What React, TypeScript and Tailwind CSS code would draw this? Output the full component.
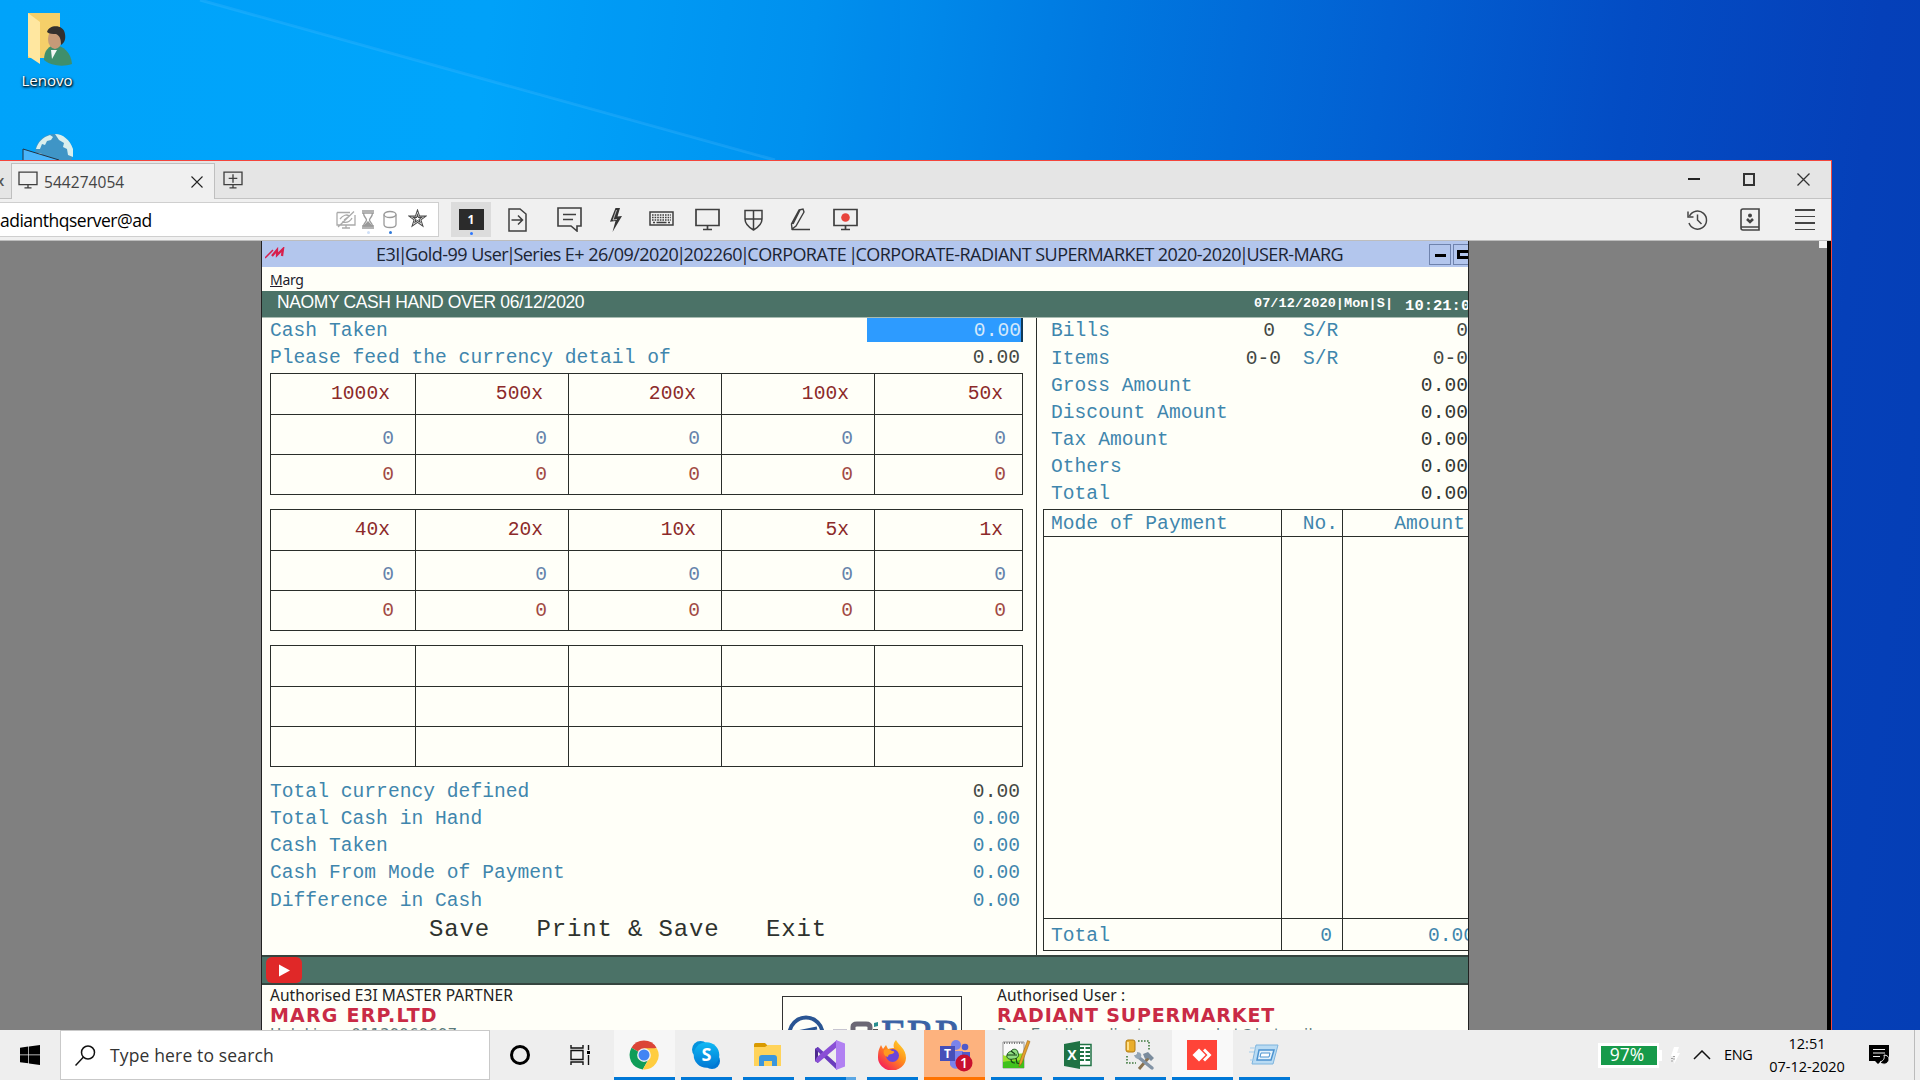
import React from "react";

const sans = "font-['Open_Sans','Noto_Sans',sans-serif]";
const mono = "font-['Liberation_Mono',monospace]";

function MonitorIcon({ children, w = 25, h = 23 }: { children?: React.ReactNode; w?: number; h?: number }) {
  return (
    <svg width={w} height={h} viewBox="0 0 25 23" fill="none" stroke="#3f3f3f" strokeWidth="1.7">
      <path d="M1 1.5h23v16H1zM12.5 17.5v4M8 21.5h9" />
      {children}
    </svg>
  );
}

function DesktopIcons() {
  return (
    <div className="flex w-[94px] flex-col items-center">
      <svg className="mt-[12px] ml-[4px]" width="48" height="56" viewBox="0 0 48 56">
        <path d="M3 1h32v45H3z" fill="#f5cf69" />
        <path d="M3 1l12 9v42L3 44z" fill="#ffe7a0" />
        <path d="M19 48c0-10 5-14 11-15 8 1 16 7 17 19-9 3-21 2-28-4z" fill="#3f8f6c" />
        <path d="M26 38l1 9 5-9z" fill="#f3f6f4" />
        <ellipse cx="30" cy="27" rx="7" ry="10" fill="#c69a78" />
        <path d="M22 20c2-8 17-8 18 2 1 6-1 9-4 11 0-6-1-9-5-11-3 0-7 0-9-2z" fill="#33302e" />
      </svg>
      <div className={`${sans} text-[15px] leading-[24px] text-white [text-shadow:1px_1px_2px_#000,0_1px_3px_#000]`}>
        Lenovo
      </div>
      <svg className="mt-[40px] ml-[2px]" width="54" height="30" viewBox="0 0 54 30">
        <circle cx="33" cy="21" r="19" fill="#3f95c6" />
        <path d="M15 17c2-7 7-12 14-14l3 2-2 3-4 1-2 4-3-1-2 5zM34 2c8 0 15 6 18 15v8l-5-2-1-6-4-2 1-4-5-3zM17 21l4 1 1 5-4 1z" fill="#d9efee" />
        <path d="M2 17l36 11v4H2z" fill="#49b5fb" stroke="#234" strokeWidth="1" />
      </svg>
    </div>
  );
}

function TabStrip() {
  return (
    <div className="flex h-[38px] items-stretch bg-[#e5e5e5]">
      <div className="w-[11px] overflow-hidden border-b border-[#bfbfbf]">
        <div className={`${sans} mt-[8px] -ml-[4px] text-[15px] leading-[22px] font-semibold text-[#555]`}>x</div>
      </div>
      <div className="mt-[2px] flex w-[204px] items-center border border-b-0 border-[#bfbfbf] bg-[#f0f0f0]">
        <div className="ml-[6px] -mt-[3px]">
          <MonitorIcon w={20} h={18} />
        </div>
        <span className={`${sans} ml-[6px] w-[141px] text-[15.5px] leading-[20px] text-[#444] tracking-[0.05px]`}>544274054</span>
        <svg className="ml-[6px]" width="12" height="12" viewBox="0 0 12 12" stroke="#222" strokeWidth="1.1">
          <path d="M.5.5l11 11M11.5.5l-11 11" />
        </svg>
      </div>
      <div className="flex flex-1 items-center border-b border-[#c3c3c3]">
        <div className="ml-[8px]">
          <MonitorIcon w={20} h={18}>
            <path d="M12.500 4v11M7 9.500h11" />
          </MonitorIcon>
        </div>
        <div className="flex-1" />
        <div className="mr-[21px] flex w-[122px] items-center justify-between pb-[1px]">
          <div className="h-[1.500px] w-[12px] bg-[#222]" />
          <div className="h-[13px] w-[12px] border-2 border-[#333]" />
          <svg width="13" height="13" viewBox="0 0 13 13" stroke="#333" strokeWidth="1.300">
            <path d="M.5.5l12 12M12.500.5l-12 12" />
          </svg>
        </div>
      </div>
    </div>
  );
}

function Slot({ w, children }: { w: string; children: React.ReactNode }) {
  return <div className={`flex h-[35px] items-center justify-center ${w}`}>{children}</div>;
}

function Toolbar() {
  return (
    <div className="flex h-[42px] items-start border-b border-[#bdbdbd] bg-[#f0f0f0] pt-[3px]">
      <div className="flex h-[35px] w-[439px] items-center border border-l-0 border-[#cfcfcf] bg-white">
        <div className={`${sans} w-[336px] text-[17.500px] leading-[24px] text-black tracking-[-0.500px]`}>adianthqserver@ad</div>
        <svg width="20" height="18" viewBox="0 0 20 18" fill="none" stroke="#aaa" strokeWidth="1.300">
          <path d="M1 1.500h13M19 4v10H1V1.500M10 14v3M6 17h8M2 16L18 .5M4 8c3-4 7-5 9-3M6 11c4 1 8 0 10-4M8 9l4-3" />
        </svg>
        <div className="mt-[5px] ml-[5px] flex flex-col items-center">
          <svg width="14" height="19" viewBox="0 0 14 19" fill="none" stroke="#9a9a9a" strokeWidth="1.300">
            <path d="M1 1h12M1 3h12M1 18h12M1 16h12M2.500 3c0 4 3 5 3 7s-3 3-3 6M11.500 3c0 4-3 5-3 7s3 3 3 6" />
            <path d="M3 16l4-4 4 4z" fill="#9a9a9a" />
          </svg>
          <div className="mt-[2px] size-[3px] rounded-full bg-[#cfe0f8]" />
        </div>
        <div className="mt-[5px] ml-[8px] flex flex-col items-center">
          <svg width="14" height="19" viewBox="0 0 14 19" fill="none" stroke="#9a9a9a" strokeWidth="1.300">
            <ellipse cx="7" cy="4.500" rx="6" ry="3" />
            <path d="M1 4.500v10c0 4 12 4 12 0v-10" />
          </svg>
          <div className="mt-[2px] size-[3px] rounded-full bg-[#2f78d8]" />
        </div>
        <svg className="-mt-[2px] ml-[11px]" width="19" height="19" viewBox="0 0 20 20" fill="none" stroke="#4a4a4a" strokeWidth="1.100">
          <path d="M10 1l2.200 6.500H19l-5.400 4 2.100 6.500-5.700-4-5.700 4 2.100-6.500L1 7.500h6.800z" />
          <path d="M10 6l1 3h3.300l-2.600 2 1 3-2.700-1.800L7.300 14l1-3-2.600-2H9z" />
        </svg>
      </div>
      <div className="ml-[12px] flex h-[35px] w-[40px] flex-col items-center bg-[#dcdcdc]">
        <div className="mt-[7px] h-[21px] w-[25px] bg-[#2b2b2b] text-center font-['Open_Sans',sans-serif] text-[12px] leading-[21px] font-bold text-white">1</div>
        <div className="mt-[2px] size-[3px] rounded-full bg-[#2f78ff]" />
      </div>
      <Slot w="w-[53px]">
        <svg width="19" height="24" viewBox="0 0 19 24" fill="none" stroke="#3f3f3f" strokeWidth="1.500">
          <path d="M1 1h11l6 5v17H1zM3.500 12h11M10 7.500l4.500 4.500-4.500 4.500" />
        </svg>
      </Slot>
      <Slot w="w-[51px]">
        <svg width="25" height="25" viewBox="0 0 25 25" fill="none" stroke="#3f3f3f" strokeWidth="1.600">
          <path d="M1 1h23v18h-4v5l-6-5H1zM6 7.500h13M6 12.500h10" />
        </svg>
      </Slot>
      <Slot w="w-[42px]">
        <svg width="12" height="24" viewBox="0 0 12 24" fill="#333">
          <path d="M5.500 0h4.500L7.500 8.500 12 8 2.500 24 5.500 13 0 13.800z" />
          <path d="M6.500 2L3 12l4-.6" stroke="#f0f0f0" strokeWidth=".7" fill="none" />
        </svg>
      </Slot>
      <Slot w="w-[49px]">
        <svg className="-mt-[3px]" width="25" height="15" viewBox="0 0 25 15" fill="none" stroke="#3f3f3f" strokeWidth="1.500">
          <path d="M1 1h23v13H1z" />
          <path d="M3 4h19M3 6.500h19M3 9h19" strokeDasharray="1.600 1" />
          <path d="M4 11.500h2M7.500 11.500h10M19 11.500h2" />
        </svg>
      </Slot>
      <Slot w="w-[43px]">
        <MonitorIcon />
      </Slot>
      <Slot w="w-[48px]">
        <svg width="19" height="22" viewBox="0 0 19 22" fill="none" stroke="#3f3f3f" strokeWidth="1.500">
          <path d="M1 1.500h17V10c0 6-5 9-8.500 11C6 19 1 16 1 10zM9.500 1.500V21M1 10h17" />
        </svg>
      </Slot>
      <Slot w="w-[46px]">
        <svg width="20" height="23" viewBox="0 0 20 23" fill="none" stroke="#3f3f3f" strokeWidth="1.400">
          <path d="M9 2l4-1 1 3-8 14-4 3-.5-5zM10 2l-7 14M2 21.500h18" />
        </svg>
      </Slot>
      <Slot w="w-[44px]">
        <MonitorIcon>
          <circle cx="12.500" cy="9.500" r="4.300" fill="#e8443c" stroke="none" />
        </MonitorIcon>
      </Slot>
      <div className="flex-1" />
      <div className="mr-[16px] flex h-[35px] w-[128px] items-center justify-between">
        <svg width="21" height="22" viewBox="0 0 21 22" fill="none" stroke="#444" strokeWidth="1.500">
          <path d="M2.500 7A9 9 0 1 1 2 14M1 2.500V8h5.500M10.500 5.500V11l4 4" />
        </svg>
        <svg className="-ml-[3px]" width="20" height="23" viewBox="0 0 20 23" fill="none" stroke="#444" strokeWidth="1.600">
          <path d="M1 3a2 2 0 0 1 2-2h16v21H3a2 2 0 0 1-2-2zM1 19h18" />
          <circle cx="10" cy="7.500" r="1.200" fill="#333" />
          <path d="M7 11l3 3 3-3" strokeWidth="2.600" />
        </svg>
        <div className="flex h-[21px] w-[20px] flex-col justify-between">
          {[0, 1, 2, 3].map((i) => (
            <div key={i} className="h-[1.500px] bg-[#444]" />
          ))}
        </div>
      </div>
    </div>
  );
}

const label = "text-[#3f86ad]";
const line = "border-[#2a2e2a]";

function DenominationTable({ heads }: { heads: string[] }) {
  return (
    <div className={`grid w-[753px] grid-cols-[146px_153px_153px_153px_148px] grid-rows-[41px_40px_40px] border-t ${line}`}>
      {[0, 1, 2].map((row) =>
        [0, 1, 2, 3, 4].map((col) => {
          const text = heads.length ? (row === 0 ? heads[col] : "0") : "";
          const color = row === 1 ? "text-[#6583ab]" : row === 0 ? "text-[#8c2a2a]" : "text-[#a14a44]";
          const padInner = row === 0 ? "pr-[25px]" : "pr-[21px]";
          const padLast = row === 0 ? "pr-[19px]" : "pr-[16px]";
          return (
            <div
              key={`${row}-${col}`}
              className={`flex items-center justify-end border-r border-b ${line} ${col === 0 ? "border-l" : ""} ${row === 0 ? "pt-[1px]" : row === 1 ? "pt-[11px]" : "pt-[2px]"} ${color} ${col === 4 ? padLast : padInner}`}
            >
              {text}
            </div>
          );
        }),
      )}
    </div>
  );
}

function LabelRow({ name, value, valueColor }: { name: string; value: string; valueColor: string }) {
  return (
    <div className="flex h-[27.150px] items-center justify-between pr-[3px]">
      <span className={label}>{name}</span>
      <span className={valueColor}>{value}</span>
    </div>
  );
}

function LeftPane() {
  return (
    <div className="w-[775px] border-r border-[#2a2e2a] pl-[8px]">
      <div className="w-[753px]">
        <div className="flex h-[27px] items-start justify-between">
          <span className={`${label} leading-[27px]`}>Cash Taken</span>
          <span className="h-[24px] w-[156px] border-r-2 border-[#123a55] bg-[#2d9bff] text-right leading-[27px] text-[#d5e9fb]">0.00</span>
        </div>
        <LabelRow name="Please feed the currency detail of" value="0.00" valueColor="text-[#444844]" />
      </div>
      <div className="mt-[1px] flex flex-col gap-[14px]">
        <DenominationTable heads={["1000x", "500x", "200x", "100x", "50x"]} />
        <DenominationTable heads={["40x", "20x", "10x", "5x", "1x"]} />
        <DenominationTable heads={[]} />
      </div>
      <div className="mt-[12px] w-[753px]">
        <LabelRow name="Total currency defined" value="0.00" valueColor="text-[#444844]" />
        <LabelRow name="Total Cash in Hand" value="0.00" valueColor={label} />
        <LabelRow name="Cash Taken" value="0.00" valueColor={label} />
        <LabelRow name="Cash From Mode of Payment" value="0.00" valueColor={label} />
        <LabelRow name="Difference in Cash" value="0.00" valueColor={label} />
      </div>
      <div className="-mt-[1px] flex gap-[46.500px] pl-[159px] text-[24px] leading-[32px] tracking-[0.850px] text-[#2e322e]">
        <span>Save</span>
        <span>Print &amp; Save</span>
        <span>Exit</span>
      </div>
    </div>
  );
}

function RightPane() {
  const totals = ["Gross Amount", "Discount Amount", "Tax Amount", "Others", "Total"];
  const counts = [
    ["Bills", "0", "0", "w-[224px]"],
    ["Items", "0-0", "0-0", "w-[230px]"],
  ];
  return (
    <div className="w-[431px] overflow-hidden pl-[6px]">
      <div className="h-[191px] pt-[0.500px]">
        {counts.map(([name, a, b, w]) => (
          <div key={name} className="flex h-[27.150px] items-center pl-[8px]">
            <span className={`flex justify-between ${w}`}>
              <span className={label}>{name}</span>
              <span className="text-[#444844]">{a}</span>
            </span>
            <span className={`${label} ${a === "0" ? "ml-[28px]" : "ml-[22px]"}`}>S/R</span>
            <span className="flex-1 text-right text-[#444844]">{b}</span>
          </div>
        ))}
        {totals.map((name) => (
          <div key={name} className="flex h-[27.150px] items-center justify-between pl-[8px]">
            <span className={label}>{name}</span>
            <span className="text-[#333733]">0.00</span>
          </div>
        ))}
      </div>
      <div className={`grid w-[440px] grid-cols-[239px_61px_140px] grid-rows-[27px_382px_32px] border-t ${line} ${label}`}>
        <div className={`border-r border-b border-l pl-[7px] leading-[28px] ${line}`}>Mode of Payment</div>
        <div className={`border-r border-b pr-[4px] text-right leading-[28px] ${line}`}>No.</div>
        <div className={`border-b pr-[18px] text-right leading-[28px] ${line}`}>Amount</div>
        <div className={`border-r border-b border-l ${line}`} />
        <div className={`border-r border-b ${line}`} />
        <div className={`border-b ${line}`} />
        <div className={`border-r border-b border-l pl-[7px] leading-[34px] ${line}`}>Total</div>
        <div className={`border-r border-b pr-[10px] text-right leading-[34px] ${line}`}>0</div>
        <div className={`border-b pl-[85px] leading-[34px] ${line}`}>0.00</div>
      </div>
    </div>
  );
}

function Footer() {
  return (
    <div className="flex h-[47px] overflow-hidden bg-[#fffff8] font-['DejaVu_Sans',sans-serif]">
      <div className="w-[520px] shrink-0 pl-[8px] whitespace-nowrap">
        <div className="font-['Noto_Sans',sans-serif] text-[15.500px] leading-[20px] tracking-[0.060px] text-[#222]">Authorised E3I MASTER PARTNER</div>
        <div className="text-[19px] leading-[21px] font-bold tracking-[1.200px] text-[#c92b45]">MARG ERP.LTD</div>
        <div className="text-[15px] leading-[18px] tracking-[0.100px] text-[#5c7a7a]">HelpLine : 01139969697</div>
      </div>
      <div className="mt-[11px] h-[60px] w-[180px] shrink-0 border border-[#333]">
        <svg width="178" height="58" viewBox="0 0 178 58">
          <circle cx="23" cy="37" r="16.500" fill="none" stroke="#2a5593" strokeWidth="4" />
          <path d="M14 35l20-4" stroke="#2a5593" strokeWidth="3" />
          <path d="M50 34h14" stroke="#8f8aa8" strokeWidth="3" />
          <path d="M70 50V30q0-3 4-3h9q4 0 4 3v20" fill="none" stroke="#6c6874" strokeWidth="5" />
          <path d="M91 26l4-1v4l-4 1z" fill="#2a8f8f" />
          <path d="M90 32h5v20h-5z" fill="#555" />
          <text x="98" y="50" fontFamily="Liberation Serif" fontSize="39" fill="#3a62a5" stroke="#3a62a5" strokeWidth=".8" textLength="77" lengthAdjust="spacingAndGlyphs">ERP</text>
        </svg>
      </div>
      <div className="ml-[35px] whitespace-nowrap">
        <div className="font-['Noto_Sans',sans-serif] text-[15.500px] leading-[20px] tracking-[0.120px] text-[#222]">Authorised User :</div>
        <div className="text-[19px] leading-[21px] font-bold tracking-[0.850px] text-[#c92b45]">RADIANT SUPERMARKET</div>
        <div className="text-[15px] leading-[18px] tracking-[0.150px] text-[#5c7a7a]">Reg Email : radiantsupermarket@hotmail</div>
      </div>
    </div>
  );
}

const titleParts = [
  "E3I",
  "Gold-99 User",
  "Series E+ 26/09/2020",
  "202260",
  "CORPORATE ",
  "CORPORATE-RADIANT SUPERMARKET 2020-2020",
  "USER-MARG",
];

function MargApp() {
  return (
    <div className="flex w-[1208px] flex-col overflow-hidden border-x border-[#222] bg-[#fffff8]">
      <div className="flex h-[26px] items-center bg-[#b3c6ed]">
        <svg className="-mt-[3px] ml-[3px] shrink-0" width="20" height="12" viewBox="0 0 20 12" fill="none" stroke="#d81f4c">
          <path d="M0 11L8 3" strokeWidth="1.500" />
          <path d="M7 9l5-6 0 5 6-6-1 7" strokeWidth="2.300" />
        </svg>
        <div className={`${sans} ml-[91px] w-[1053px] shrink-0 text-[18px] leading-[26px] whitespace-pre text-[#1b2433] tracking-[-0.550px]`}>
          {titleParts.map((part, i) => (
            <React.Fragment key={i}>
              {i > 0 && <span className="-mx-[2px]">|</span>}
              {part}
            </React.Fragment>
          ))}
        </div>
        <div className="flex shrink-0 gap-[2px]">
          <div className="flex h-[21px] w-[22px] items-center justify-center border border-[#6f83ad]">
            <div className="mt-[3px] h-[3px] w-[11px] bg-black" />
          </div>
          <div className="flex h-[21px] w-[22px] items-center justify-center border border-[#6f83ad]">
            <div className="h-[9px] w-[14px] border-[3px] border-black" />
          </div>
        </div>
      </div>
      <div className="h-[24px] pl-[8px] font-['Noto_Sans',sans-serif] text-[14px] leading-[26px] tracking-[-0.300px] text-[#221c2c]">
        <span className="underline">M</span>arg
      </div>
      <div className="flex h-[27px] items-start justify-between border-b border-[#a9bcb2] bg-[#4b7267] text-white">
        <span className="pl-[15px] font-['Liberation_Sans',sans-serif] text-[17.500px] leading-[22px] tracking-[-0.370px]">NAOMY CASH HAND OVER 06/12/2020</span>
        <span className={`flex w-[214px] shrink-0 gap-[12px] overflow-hidden font-bold whitespace-nowrap ${mono}`}>
          <span className="text-[13.500px] leading-[25px] tracking-[0.080px]">07/12/2020|Mon|S|</span>
          <span className="text-[15.500px] leading-[30px]">10:21:04</span>
        </span>
      </div>
      <div className={`flex h-[637px] text-[19.600px] tracking-[0.030px] whitespace-pre ${mono}`}>
        <LeftPane />
        <RightPane />
      </div>
      <div className="flex h-[30px] items-center border-y-2 border-[#35453f] bg-[#4b7267] pl-[4px]">
        <div className="flex h-[26px] w-[36px] items-center justify-center rounded-[6px] bg-[#e02828]">
          <svg width="12" height="13" viewBox="0 0 12 13">
            <path d="M1 .5l11 6-11 6z" fill="#fff" />
          </svg>
        </div>
      </div>
      <Footer />
    </div>
  );
}

const chrome = (
  <svg width="30" height="30" viewBox="0 0 48 48">
    <path d="M24 24L4 12.500A23 23 0 0 1 44 12.500z" fill="#db4437" />
    <path d="M24 24L4 12.500A23 23 0 0 0 22 47l8-14z" fill="#0f9d58" />
    <path d="M24 13h20.500A23 23 0 0 1 22 47l10-17z" fill="#ffcd40" />
    <circle cx="24" cy="24" r="11" fill="#f1f1f1" />
    <circle cx="24" cy="24" r="8.800" fill="#4285f4" />
  </svg>
);
const skype = (
  <svg width="30" height="30" viewBox="0 0 30 30">
    <defs>
      <linearGradient id="sk" x1="0" y1="0" x2="0" y2="1">
        <stop offset="0" stopColor="#10b9f4" />
        <stop offset="1" stopColor="#0078d4" />
      </linearGradient>
    </defs>
    <circle cx="9.500" cy="9.500" r="8.500" fill="#0593dd" />
    <circle cx="21" cy="21" r="8" fill="#0078d4" />
    <circle cx="15.500" cy="15" r="12.800" fill="url(#sk)" />
    <text x="15.500" y="21" fontFamily="Open Sans" fontWeight="700" fontSize="18" fill="#fff" textAnchor="middle">S</text>
  </svg>
);
const explorer = (
  <svg width="28" height="24" viewBox="0 0 28 24">
    <path d="M0 1.500Q0 0 1.500 0H11l3 3-3 3H0z" fill="#d99a00" />
    <path d="M0 4h11l3-2h13v21H0z" fill="#ffd35a" />
    <path d="M5 23V15q0-3 3-3h12q3 0 3 3v8h-5v-5h-8v5z" fill="#3a96dd" />
  </svg>
);
const visualStudio = (
  <svg width="32" height="32" viewBox="0 0 32 32">
    <path d="M1 10l3-2v16l-3-2z" fill="#4b2a8c" />
    <path d="M1 10l3-2 19 17v6z" fill="#6a3cbd" />
    <path d="M1 22l3 2L23 8V1L3 18z" fill="#8a4fd6" />
    <path d="M22 1l9 3.500v23L22 31z" fill="#b180f2" />
  </svg>
);
const firefox = (
  <svg width="30" height="30" viewBox="0 0 30 30">
    <defs>
      <linearGradient id="ff" x1="1" y1="0" x2="0.200" y2="1">
        <stop offset="0" stopColor="#ffe22c" />
        <stop offset=".5" stopColor="#ff8a1c" />
        <stop offset="1" stopColor="#f5155f" />
      </linearGradient>
    </defs>
    <path d="M1 17C1 11 2 9 4 5l2 4 3-4 2 4c3-1 4-1 6-1-1-3 0-6 2-8 2 5 10 8 10 18a14 13 0 0 1-28-1z" fill="url(#ff)" />
    <circle cx="15.500" cy="15.500" r="6.500" fill="#6c45d8" />
    <path d="M7 10c3-2 6-1 8 1 3 0 3 2 0 3-3 0-4 1-4 3-4-1-5-4-4-7z" fill="#ff9a20" />
  </svg>
);
const teams = (
  <svg className="ml-[3px]" width="34" height="34" viewBox="0 0 34 34">
    <circle cx="17" cy="7" r="5" fill="#7b83eb" />
    <circle cx="26" cy="9" r="3.300" fill="#5059c9" />
    <path d="M11 13h13v12a7 7 0 0 1-13 2z" fill="#7b83eb" />
    <path d="M23 14h8v10h-8z" fill="#5059c9" />
    <path d="M1 8h15v15H1z" fill="#464eb8" />
    <text x="8.500" y="20" fontFamily="Open Sans" fontWeight="700" fontSize="12" fill="#fff" textAnchor="middle">T</text>
    <circle cx="25" cy="25" r="8.500" fill="#c8102e" />
    <text x="25" y="30" fontFamily="Open Sans" fontWeight="600" fontSize="14" fill="#fff" textAnchor="middle">1</text>
  </svg>
);
const notepad = (
  <svg width="30" height="30" viewBox="0 0 30 30">
    <path d="M2 2h21v26H2z" fill="#fafafa" stroke="#999" />
    <path d="M3 3h19" stroke="#777" strokeDasharray="1 1.500" strokeWidth="2" />
    <path d="M2 15c6 3 14-3 21-1v14H2z" fill="#9be02f" />
    <path d="M2 22c7-2 14 0 21-3v9H2z" fill="#3fc21d" />
    <path d="M6 15c1-4 4-3 5-5 3-2 6 0 6 3 2 3-1 6-5 6-4 1-7-1-6-4z" fill="#8fdc80" stroke="#205c20" />
    <path d="M6 15l10 0M10 11l4 3M10 19c0 3 2 4 4 4M15 18l1 5 4 1" fill="none" stroke="#163f16" strokeWidth="1.200" />
    <path d="M29 1.500L21 23l-3 4 .5-5L26.500.5z" fill="#e5a02c" stroke="#8a5a14" strokeWidth=".5" />
  </svg>
);
const excel = (
  <svg width="28" height="28" viewBox="0 0 28 28">
    <path d="M14 3.500h13v21H14z" fill="#fff" stroke="#1f7244" strokeWidth="1.500" />
    <path d="M16 7h4M16 11h4M16 15h4M16 19h4M21.500 7H26M21.500 11H26M21.500 15H26M21.500 19H26" stroke="#1f7244" strokeWidth="2" />
    <path d="M0 3L16 0v28L0 25z" fill="#1f7244" />
    <text x="8" y="19" fontFamily="Open Sans" fontWeight="700" fontSize="14" fill="#fff" textAnchor="middle">X</text>
  </svg>
);
const sqlTools = (
  <svg width="30" height="32" viewBox="0 0 30 32">
    <rect x="1" y="1" width="9" height="12" rx="2" fill="#e9ae2c" stroke="#b17a10" />
    <path d="M3 3v8" stroke="#ffe08a" strokeWidth="2" />
    <path d="M13 2h11v10M2 17v7h9" fill="none" stroke="#3f7a3f" strokeWidth="1.600" strokeDasharray="1.600 1.400" />
    <path d="M25 17L14 30" stroke="#8a7350" strokeWidth="3" />
    <path d="M12 17l15 12" stroke="#8293a5" strokeWidth="3.500" strokeLinecap="round" />
    <path d="M9 16l3 0 0-3c4 0 5 3 4 5-2 3-6 2-7-2z" fill="#93a5b6" />
    <path d="M18 15l5-2 6 6-3 3-3-3-3 1z" fill="#7a8b9c" />
  </svg>
);
const anydesk = (
  <div className="flex size-[30px] items-center justify-center bg-[#ff4438]">
    <svg width="20" height="14" viewBox="0 0 20 14" fill="#fff">
      <path d="M7 .5L13.500 7 7 13.500.5 7z" />
      <path d="M11 2.500L13 .5 19.500 7 13 13.500l-2-2L15.500 7z" />
    </svg>
  </div>
);
const runDialog = (
  <svg width="30" height="22" viewBox="0 0 30 22">
    <path d="M7 1h22l-5 19H3z" fill="#b9dbf3" stroke="#7db4de" />
    <path d="M10 6h15l-3 10H8z" fill="#e4f2fc" stroke="#4c93d0" strokeWidth="1.500" />
    <path d="M12 9h9l-1 4h-9z" fill="#fff" stroke="#4c93d0" />
    <path d="M1 4h6M0 8h5M1 16h5" stroke="#a5cdea" />
  </svg>
);

const pinned = [
  { id: "chrome", icon: chrome, tile: "bg-[#f6f6f6]", bar: "w-[61px] bg-[#0078d7]" },
  { id: "skype", icon: skype, tile: "", bar: "w-[51px] bg-[#0078d7]" },
  { id: "explorer", icon: explorer, tile: "", bar: "w-[51px] bg-[#0078d7]" },
  { id: "vs", icon: visualStudio, tile: "", bar: "w-[51px] border-r-[10px] border-[#5ba7e4] bg-[#0078d7]" },
  { id: "firefox", icon: firefox, tile: "", bar: "w-[51px] bg-[#0078d7]" },
  { id: "teams", icon: teams, tile: "bg-[#fdb27e]", bar: "w-[61px] bg-[#ff7300]" },
  { id: "notepad", icon: notepad, tile: "", bar: "w-[51px] bg-[#0078d7]" },
  { id: "excel", icon: excel, tile: "", bar: "w-[51px] bg-[#0078d7]" },
  { id: "sql", icon: sqlTools, tile: "", bar: "w-[51px] bg-[#0078d7]" },
  { id: "anydesk", icon: anydesk, tile: "bg-[#f9f9f9]", bar: "w-[61px] bg-[#0078d7]" },
  { id: "run", icon: runDialog, tile: "", bar: "w-[51px] bg-[#0078d7]" },
];

function Taskbar() {
  return (
    <div className={`flex h-[50px] items-stretch bg-[#eeeeee] ${sans}`}>
      <div className="flex w-[60px] items-center justify-center">
        <svg width="20" height="20" viewBox="0 0 20 20" fill="#000">
          <path d="M0 2.800L8.300 1.600V9.500H0zM9 1.500L20 0v9.500H9zM0 10.300h8.300v8L0 17.200zM9 10.300h11V20L9 18.500z" />
        </svg>
      </div>
      <div className="flex w-[430px] items-center border border-[#c9c9c9] bg-white">
        <svg className="ml-[14px]" width="21" height="21" viewBox="0 0 21 21" fill="none" stroke="#111" strokeWidth="1.500">
          <circle cx="13" cy="7.500" r="6.500" />
          <path d="M8.500 12L.5 20.500" />
        </svg>
        <span className="ml-[14px] text-[17.500px] tracking-[0.150px] text-[#333]">Type here to search</span>
      </div>
      <div className="flex w-[61px] items-center justify-center pr-[1px]">
        <div className="size-[20px] rounded-full border-[3px] border-black" />
      </div>
      <div className="flex w-[61px] items-center justify-center pr-[3px]">
        <svg width="21" height="20" viewBox="0 0 21 20" fill="none" stroke="#111" strokeWidth="1.400">
          <path d="M1 0v3h12V0M1 20v-3h12v3M1 5.500h12v9H1zM18.500 0v5M18.500 10v10" />
          <path d="M17 6h3v3h-3z" fill="#000" stroke="none" />
        </svg>
      </div>
      <div className="ml-[1px] flex">
        {pinned.map((p) => (
          <div key={p.id} className="flex w-[62px] flex-col items-center">
            <div className={`flex h-[47px] w-[61px] items-center justify-center pt-[3px] ${p.tile}`}>{p.icon}</div>
            <div className={`h-[3px] ${p.bar}`} />
          </div>
        ))}
      </div>
      <div className="flex-1" />
      <div className="flex items-center text-black">
        <div className="flex h-[25px] w-[61px] items-center border-[3px] border-r-2 border-white bg-[#169a4a]">
          <span className="-mt-[2px] -ml-[2px] w-full text-center text-[17.500px] leading-[19px] text-white">97%</span>
        </div>
        <div className="h-[11px] w-[3px] bg-white" />
        <svg className="ml-[9px]" width="9" height="17" viewBox="0 0 9 17">
          <path d="M3 0h5L6 6h3L3 17l1-8H0z" fill="#fff" />
          <path d="M1 11v5M3 9v4" stroke="#555" strokeDasharray="1 1.500" />
        </svg>
        <svg className="ml-[13px]" width="18" height="10" viewBox="0 0 18 10" fill="none" stroke="#111" strokeWidth="1.500">
          <path d="M1 9l8-8 8 8" />
        </svg>
        <span className="ml-[13px] w-[31px] text-[14.500px] tracking-[-0.400px]">ENG</span>
        <div className="ml-[12px] w-[80px] text-center text-[14.500px] leading-[23px]">
          <div>12:51</div>
          <div>07-12-2020</div>
        </div>
        <svg className="ml-[22px]" width="22" height="21" viewBox="0 0 22 21">
          <path d="M0 0h20v16h-8l-3 3-3-3H0z" fill="#000" />
          <path d="M4 4.500h12M4 8h12M4 11.500h7" stroke="#eee" strokeWidth="1.200" />
          <path d="M15 10c1 4-1 6-4 7 3 4 9 2 9-3 0-2-2-4-5-4z" fill="#000" stroke="#eee" strokeWidth="1" />
        </svg>
        <div className="ml-[23px] h-[50px] w-[6px] border-l border-[#bbb]" />
      </div>
    </div>
  );
}

export default function App() {
  return (
    <div className="flex h-[1080px] w-[1920px] flex-col overflow-hidden">
      <div className="relative h-[1030px] overflow-hidden bg-[linear-gradient(97deg,#00a3fa_0%,#00a5fb_24%,#0093f0_40%,#0078e0_54%,#0260d2_68%,#034cc4_80%,#0540b9_92%,#053eb5_100%)]">
        <svg className="absolute top-0 left-0" width="900" height="160" viewBox="0 0 900 160">
          <path d="M200 0L480 78L775 160" fill="none" stroke="#5cc6ff" strokeOpacity=".22" strokeWidth="3" />
          <path d="M200 0L775 160H900V0z" fill="#0060d0" fillOpacity=".05" />
        </svg>
        <DesktopIcons />
        <div className="absolute top-[160px] left-0 flex h-[880px] w-[1832px] flex-col border-t border-r border-[#f4453c]">
          <TabStrip />
          <Toolbar />
          <div className="flex flex-1 overflow-hidden bg-[#808080]">
            <div className="w-[261px] shrink-0" />
            <MargApp />
            <div className="flex-1" />
            <div className="h-[7px] w-[8px] bg-[#f0f0f0]" />
            <div className="w-[4px] bg-black" />
          </div>
        </div>
      </div>
      <Taskbar />
    </div>
  );
}
